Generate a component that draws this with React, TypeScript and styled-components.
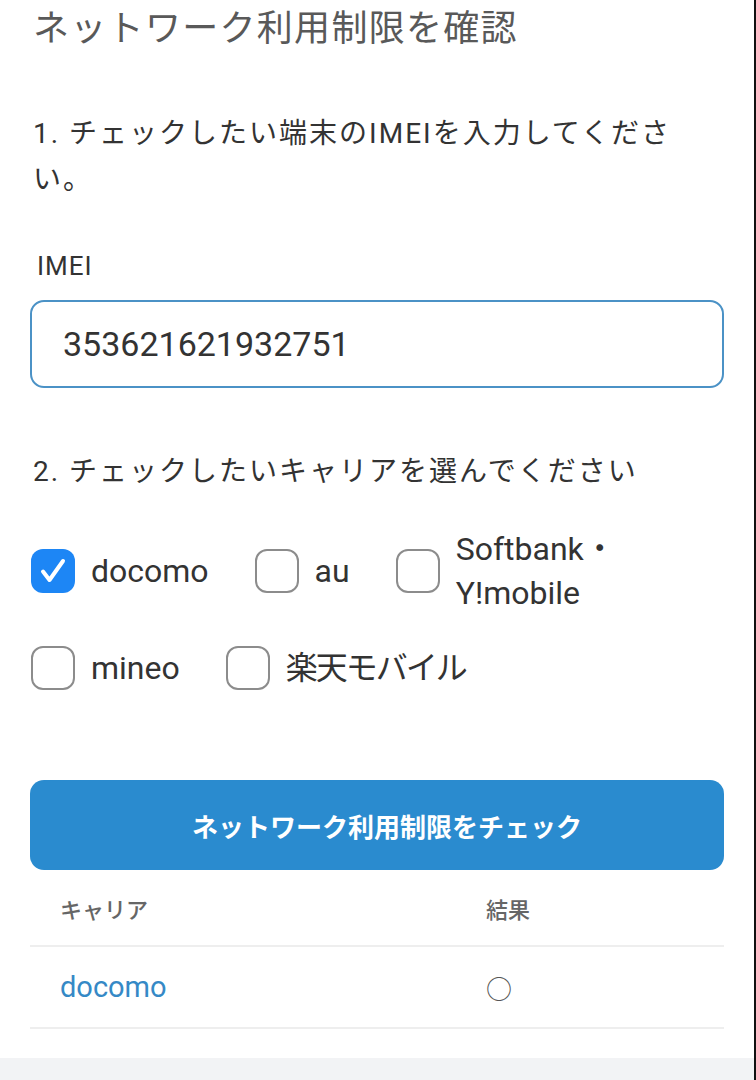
import React from "react";
import styled, { createGlobalStyle } from "styled-components";

const GlobalStyle = createGlobalStyle`
  html, body { margin: 0; padding: 0; background: #ffffff; }
  body { font-family: Roboto, "Noto Sans CJK JP", sans-serif; color: #333; }
  * { box-sizing: border-box; }
`;

const Page = styled.div`
  width: 756px;
  min-height: 1080px;
  border-right: 2px solid #111;
  display: flex;
  flex-direction: column;
  background: #fff;
`;

const Content = styled.main`
  padding: 0 30px 0 30px;
  display: flex;
  flex-direction: column;
`;

const Title = styled.h1`
  margin: 0;
  padding-left: 3px;
  font-family: "Noto Sans CJK JP", sans-serif;
  font-weight: 400;
  font-size: 36px;
  letter-spacing: 1.3px;
  line-height: 50px;
  color: #595959;
`;

const StepHeading = styled.h2<{ $top: number }>`
  margin: ${(p) => p.$top}px 0 0;
  padding-left: 3px;
  padding-right: 2px;
  font-weight: 400;
  font-size: 28px;
  letter-spacing: 2px;
  line-height: 46px;
  color: #333;
`;

const FieldLabel = styled.label`
  margin-top: 45px;
  padding-left: 7px;
  font-size: 26px;
  letter-spacing: 1px;
  line-height: 36px;
  color: #333;
`;

const TextInput = styled.input`
  margin-top: 16px;
  width: 100%;
  height: 88px;
  padding: 0 31px;
  border: 2px solid #4b92c6;
  border-radius: 14px;
  font-family: Roboto, sans-serif;
  font-size: 34px;
  color: #333;
  outline: none;
  background: #fff;
`;

const Options = styled.div`
  margin-top: 32px;
  display: flex;
  flex-wrap: wrap;
  align-items: center;
  column-gap: 46px;
  row-gap: 31px;
  padding-left: 1px;
`;

const Option = styled.label`
  display: flex;
  align-items: center;
  gap: 16px;
`;

const Box = styled.span<{ $checked?: boolean }>`
  flex: none;
  width: 44px;
  height: 44px;
  border-radius: 12px;
  border: ${(p) => (p.$checked ? "none" : "2.5px solid #8c8c8c")};
  background: ${(p) => (p.$checked ? "#1d86f5" : "#fff")};
  display: flex;
  align-items: center;
  justify-content: center;
`;

const OptionText = styled.span<{ $tight?: boolean }>`
  font-size: 32px;
  line-height: 44px;
  color: #333;
  letter-spacing: ${(p) => (p.$tight ? "-2px" : "0")};
`;

const CheckButton = styled.button`
  margin-top: 90px;
  width: 100%;
  height: 90px;
  border: none;
  border-radius: 14px;
  background: #2a8bcf;
  color: #fff;
  font-family: "Noto Sans CJK JP", sans-serif;
  font-size: 26px;
  font-weight: 700;
  letter-spacing: 0;
  padding: 0 0 0 20px;
`;

const Table = styled.div`
  display: grid;
  grid-template-columns: 426px 1fr;
`;

const HeadCell = styled.div`
  height: 77px;
  display: flex;
  align-items: center;
  padding-left: 30px;
  border-bottom: 2px solid #eeeeee;
  font-family: "Noto Sans CJK JP", sans-serif;
  font-size: 22px;
  font-weight: 500;
  color: #666;
`;

const BodyCell = styled.div`
  height: 82px;
  display: flex;
  align-items: center;
  padding-left: 30px;
  border-bottom: 2px solid #eeeeee;
  font-size: 29px;
  color: #333;
`;

const CarrierLink = styled.a`
  color: #3589c6;
  text-decoration: none;
`;

const Result = styled.span`
  font-family: "Noto Sans CJK JP", sans-serif;
  font-size: 26px;
  color: #555;
`;

const Footer = styled.div`
  margin-top: 29px;
  flex: 1;
  min-height: 20px;
  background: #f2f3f5;
`;

const CheckIcon = () => (
  <svg width="30" height="30" viewBox="0 0 30 30" fill="none">
    <path
      d="M5 15.5 L11.5 24 L25 5"
      stroke="#fff"
      strokeWidth="4"
      strokeLinecap="round"
      strokeLinejoin="round"
    />
  </svg>
);

const carriers = [
  { key: "docomo", label: <>docomo</>, checked: true },
  { key: "au", label: <>au</> },
  { key: "softbank", label: <>Softbank・<br />Y!mobile</> },
  { key: "mineo", label: <>mineo</> },
  { key: "rakuten", label: <>楽天モバイル</>, tight: true },
];

export default function App() {
  return (
    <>
      <GlobalStyle />
      <Page>
        <Content>
          <Title>ネットワーク利用制限を確認</Title>
          <StepHeading $top={61}>1. チェックしたい端末のIMEIを入力してください。</StepHeading>
          <FieldLabel htmlFor="imei">IMEI</FieldLabel>
          <TextInput id="imei" defaultValue="353621621932751" />
          <StepHeading $top={61}>2. チェックしたいキャリアを選んでください</StepHeading>
          <Options>
            {carriers.map((c) => (
              <Option key={c.key}>
                <Box $checked={c.checked}>{c.checked && <CheckIcon />}</Box>
                <OptionText $tight={c.tight}>{c.label}</OptionText>
              </Option>
            ))}
          </Options>
          <CheckButton>ネットワーク利用制限をチェック</CheckButton>
          <Table>
            <HeadCell>キャリア</HeadCell>
            <HeadCell>結果</HeadCell>
            <BodyCell>
              <CarrierLink href="#">docomo</CarrierLink>
            </BodyCell>
            <BodyCell>
              <Result>○</Result>
            </BodyCell>
          </Table>
        </Content>
        <Footer />
      </Page>
    </>
  );
}
